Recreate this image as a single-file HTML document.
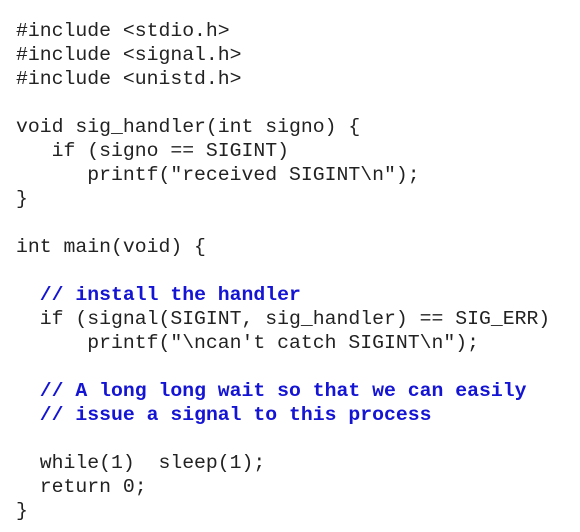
<!DOCTYPE html>
<html><head><meta charset="utf-8"><style>
html,body{margin:0;padding:0;background:#fff;width:580px;height:532px;overflow:hidden}
pre{margin:0;position:absolute;left:16px;top:19px;font-family:"Liberation Mono",monospace;font-size:19.8px;line-height:24px;color:#222}
b{color:#1414d4;font-weight:bold}
</style></head><body>
<pre>#include &lt;stdio.h&gt;
#include &lt;signal.h&gt;
#include &lt;unistd.h&gt;

void sig_handler(int signo) {
   if (signo == SIGINT)
      printf("received SIGINT\n");
}

int main(void) {

  <b>// install the handler</b>
  if (signal(SIGINT, sig_handler) == SIG_ERR)
      printf("\ncan't catch SIGINT\n");

  <b>// A long long wait so that we can easily</b>
  <b>// issue a signal to this process</b>

  while(1)  sleep(1);
  return 0;
}</pre>
</body></html>
